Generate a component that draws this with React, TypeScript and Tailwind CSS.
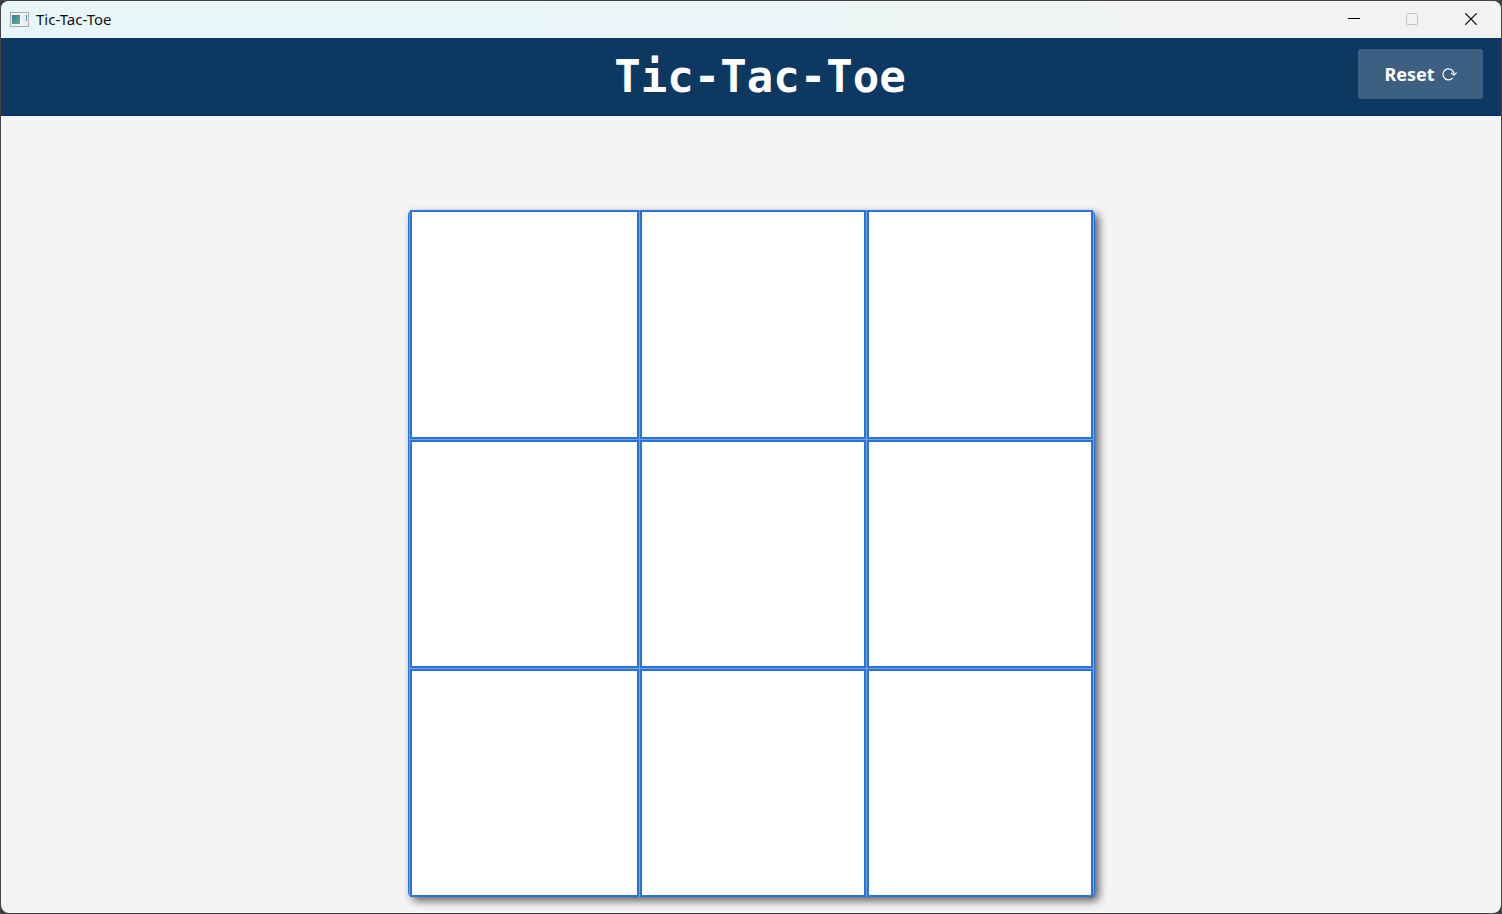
import { useState } from "react";

const columns = ["left", "center", "right"];
const rows = ["top", "middle", "bottom"];

function TitleBar() {
  return (
    <div className="flex h-[37px] shrink-0 items-center justify-between bg-linear-to-r from-[#e8f6f8] from-30% to-[#f0f3f2] to-75% pb-px pl-[9px] font-['Noto_Sans','Segoe_UI',sans-serif]">
      <div className="flex items-center gap-[7px]">
        <svg width="19" height="15" viewBox="0 0 19 15" aria-hidden="true">
          <defs>
            <linearGradient id="pane" x1="0" y1="0" x2="1" y2="1">
              <stop offset="0" stopColor="#3975a8" />
              <stop offset="1" stopColor="#5fbd7c" />
            </linearGradient>
          </defs>
          <rect x="0.5" y="0.5" width="18" height="14" fill="#f2f3f5" stroke="#a5aaae" />
          <rect x="2" y="3" width="8" height="9" fill="url(#pane)" />
          <rect x="12" y="2" width="5" height="11" fill="#eceaf0" />
          <rect x="16" y="3" width="1" height="6" fill="#4a8fa8" />
        </svg>
        <span className="text-[15px] leading-5 text-[#111111]">Tic-Tac-Toe</span>
      </div>
      <div className="flex h-full">
        <button type="button" aria-label="Minimize" className="flex w-[58px] items-center justify-center">
          <svg width="12" height="12" viewBox="0 0 12 12" aria-hidden="true">
            <path d="M0 5.5H12" stroke="#000" />
          </svg>
        </button>
        <button type="button" aria-label="Maximize" disabled className="flex w-[58px] items-center justify-center">
          <svg width="12" height="12" viewBox="0 0 12 12" aria-hidden="true">
            <rect x="0.5" y="0.5" width="11" height="11" rx="1" fill="none" stroke="#c2c5c4" />
          </svg>
        </button>
        <button type="button" aria-label="Close" className="flex w-[60px] items-center justify-center">
          <svg width="12" height="12" viewBox="0 0 12 12" aria-hidden="true">
            <path d="M0.3 0.3L11.7 11.7M11.7 0.3L0.3 11.7" stroke="#000" strokeWidth="1.2" />
          </svg>
        </button>
      </div>
    </div>
  );
}

function Header({ onReset }: { onReset: () => void }) {
  return (
    <header className="grid h-[78px] shrink-0 grid-cols-[1fr_auto_1fr] items-center border-b border-[#0a2f57] bg-[#0c3862] pr-[18px] pl-9">
      <h1 className="col-start-2 font-['DejaVu_Sans_Mono',monospace] text-[44px] leading-[44px] font-bold text-white">
        Tic-Tac-Toe
      </h1>
      <button
        type="button"
        onClick={onReset}
        className="mb-1.5 flex h-[50px] w-[125px] items-center justify-center gap-[7px] justify-self-end rounded-[3px] bg-[#3d6082] font-['Noto_Sans','Segoe_UI',sans-serif] text-lg font-bold text-white"
      >
        Reset
        <svg width="15" height="14" viewBox="0 0 15 14" fill="none" stroke="#fff" strokeWidth="1.2" aria-hidden="true">
          <path d="M10.6 11A5.5 5.5 0 1 1 12 7.8" />
          <path d="M9 6L12 8.2L14.6 5.6" />
        </svg>
      </button>
    </header>
  );
}

export default function App() {
  const [moves, setMoves] = useState<string[]>(Array(9).fill(""));

  const play = (index: number) => {
    if (moves[index]) return;
    const mark = moves.filter(Boolean).length % 2 === 0 ? "X" : "O";
    setMoves(moves.map((move, i) => (i === index ? mark : move)));
  };

  return (
    <div className="min-h-screen bg-[#3b3b3d]">
      <div className="flex min-h-screen flex-col border border-[#444446] bg-clip-padding">
        <div className="flex flex-1 flex-col overflow-hidden rounded-lg bg-[#f4f4f4]">
          <TitleBar />
          <Header onReset={() => setMoves(Array(9).fill(""))} />
          <main className="flex flex-1 justify-center pt-[94px] pb-4">
            <div className="grid grid-cols-[229px_226px_226px] grid-rows-[229px_228px_228px] gap-px self-start rounded-[5px] border-x border-[#2a74d6] bg-[#70a4e8] px-px shadow-[4px_4px_8px_rgba(0,0,0,0.6)]">
              {moves.map((move, index) => (
                <button
                  key={index}
                  type="button"
                  aria-label={`${rows[Math.floor(index / 3)]} ${columns[index % 3]}`}
                  onClick={() => play(index)}
                  className="border-2 border-[#2a74d6] bg-white text-8xl font-bold text-[#0c3862]"
                >
                  {move}
                </button>
              ))}
            </div>
          </main>
        </div>
      </div>
    </div>
  );
}
